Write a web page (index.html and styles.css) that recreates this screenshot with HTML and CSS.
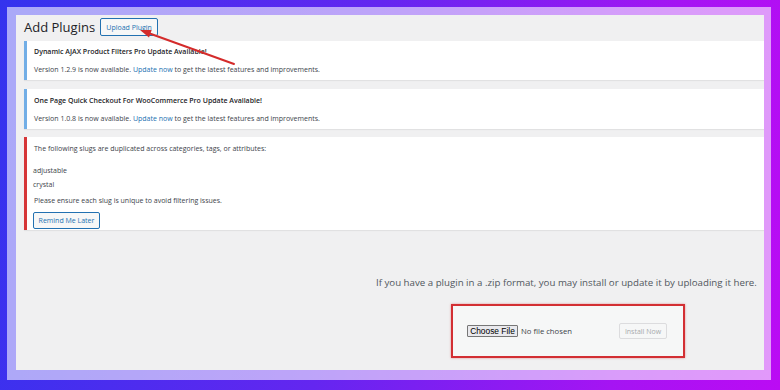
FILE: index.html
```html
<!DOCTYPE html>
<html lang="en">
<head>
<meta charset="utf-8">
<title>Add Plugins</title>
<link rel="stylesheet" href="styles.css">
</head>
<body>
<div class="outer">
  <div class="band">
    <div class="screen">
      <div class="header">
        <h1 class="title">Add Plugins</h1>
        <span class="btn-upload">Upload Plugin</span>
      </div>

      <div class="notice notice-info">
        <p class="strong">Dynamic AJAX Product Filters Pro Update Available!</p>
        <p>Version 1.2.9 is now available. <a href="#">Update now</a> to get the latest features and improvements.</p>
      </div>

      <div class="notice notice-info notice-second">
        <p class="strong">One Page Quick Checkout For WooCommerce Pro Update Available!</p>
        <p>Version 1.0.8 is now available. <a href="#">Update now</a> to get the latest features and improvements.</p>
      </div>

      <div class="notice notice-error">
        <p>The following slugs are duplicated across categories, tags, or attributes:</p>
        <ul class="slugs">
          <li>adjustable</li>
          <li>crystal</li>
        </ul>
        <p>Please ensure each slug is unique to avoid filtering issues.</p>
        <span class="btn-remind">Remind Me Later</span>
      </div>

      <div class="upload">
        <p class="upload-help">If you have a plugin in a .zip format, you may install or update it by uploading it here.</p>
        <div class="upload-box">
          <span class="file-btn">Choose File</span>
          <span class="file-none">No file chosen</span>
          <span class="btn-install">Install Now</span>
        </div>
      </div>

      <svg class="arrow" width="130" height="60" viewBox="0 0 130 60">
        <line x1="118" y1="49" x2="33" y2="18.3" stroke="#d42b2b" stroke-width="2" stroke-linecap="round"/>
        <polygon points="24,15 35.7,14.9 33,22.5" fill="#d42b2b"/>
      </svg>
    </div>
  </div>
</div>
</body>
</html>
```
FILE: styles.css
```css
* { box-sizing: border-box; }
html, body { margin: 0; padding: 0; }
body {
  width: 780px;
  height: 390px;
  overflow: hidden;
  font-family: "Open Sans", "Noto Sans", sans-serif;
}
.outer {
  width: 780px;
  height: 390px;
  padding: 7px 9px 10px 7px;
  background: linear-gradient(100deg, #3433ee 0%, #6426f0 45%, #a514f3 80%, #bb0bf4 100%);
}
.band {
  height: 100%;
  padding: 8px 7px 10px 9px;
  background: rgba(255, 255, 255, 0.58);
}
.screen {
  position: relative;
  height: 100%;
  background: #f0f0f1;
  overflow: hidden;
  display: flex;
  flex-direction: column;
}
.header {
  display: flex;
  align-items: center;
  gap: 5px;
  margin: 3px 0 0 8px;
  height: 18px;
}
.title {
  margin: 0;
  font-size: 13px;
  font-weight: 400;
  color: #1d2327;
  line-height: 18px;
}
.btn-upload {
  display: inline-flex;
  align-items: center;
  justify-content: center;
  width: 58px;
  height: 18px;
  border: 1px solid #2271b1;
  border-radius: 2px;
  background: #f6f7f7;
  color: #2271b1;
  font-size: 7px;
}
.notice {
  margin: 5px 0 0 8px;
  background: #fff;
  border-left: 3px solid #72aee6;
  box-shadow: 0 1px 1px rgba(0,0,0,0.06);
  padding: 6px 0 5px 7px;
  color: #3c434a;
  font-size: 7px;
  display: flex;
  flex-direction: column;
  gap: 8px;
}
.notice p { margin: 0; line-height: 10px; white-space: nowrap; }
.notice .strong { font-weight: 600; color: #1d2327; }
.notice a { color: #2271b1; text-decoration: none; }
.notice-second { margin-top: 9px; padding-top: 7px; }
.notice-error {
  margin-top: 8px;
  border-left-color: #d63638;
  gap: 0;
  padding: 7px 0 1px 7px;
}
.slugs {
  list-style: none;
  margin: 10px 0 0 -1px;
  padding: 0;
}
.slugs li { line-height: 14px; }
.notice-error .slugs + p { margin-top: 4px; }
.btn-remind {
  display: inline-flex;
  align-items: center;
  justify-content: center;
  align-self: flex-start;
  margin: 6px 0 0 -1px;
  width: 67px;
  height: 17px;
  border: 1px solid #2271b1;
  border-radius: 2px;
  background: #f6f7f7;
  color: #2271b1;
  font-size: 7px;
}
.upload {
  margin-top: 47px;
  padding-left: 360px;
}
.upload-help {
  margin: 0;
  font-size: 9.7px;
  line-height: 12px;
  color: #50575e;
  white-space: nowrap;
}
.upload-box {
  margin: 15px 0 0 75px;
  width: 234px;
  height: 54px;
  border: 2px solid #d32f33;
  box-shadow: 0 0 2px rgba(211,47,51,0.5);
  background: #f6f7f7;
  display: flex;
  align-items: center;
  padding: 0 16px 0 14px;
}
.file-btn {
  display: inline-flex;
  align-items: center;
  justify-content: center;
  width: 51px;
  height: 12px;
  border: 1px solid #767676;
  background: #e9e9ed;
  border-radius: 1px;
  font-family: "Liberation Sans", Arial, sans-serif;
  font-size: 8.4px;
  color: #000;
}
.file-none {
  margin-left: 3px;
  font-size: 7.7px;
  color: #3c434a;
}
.btn-install {
  margin-left: auto;
  display: inline-flex;
  align-items: center;
  justify-content: center;
  width: 48px;
  height: 16px;
  border: 1px solid #dcdcde;
  border-radius: 2px;
  background: #f6f7f7;
  color: #a7aaad;
  font-size: 7px;
}
.arrow {
  position: absolute;
  left: 100px;
  top: 0;
}
```
